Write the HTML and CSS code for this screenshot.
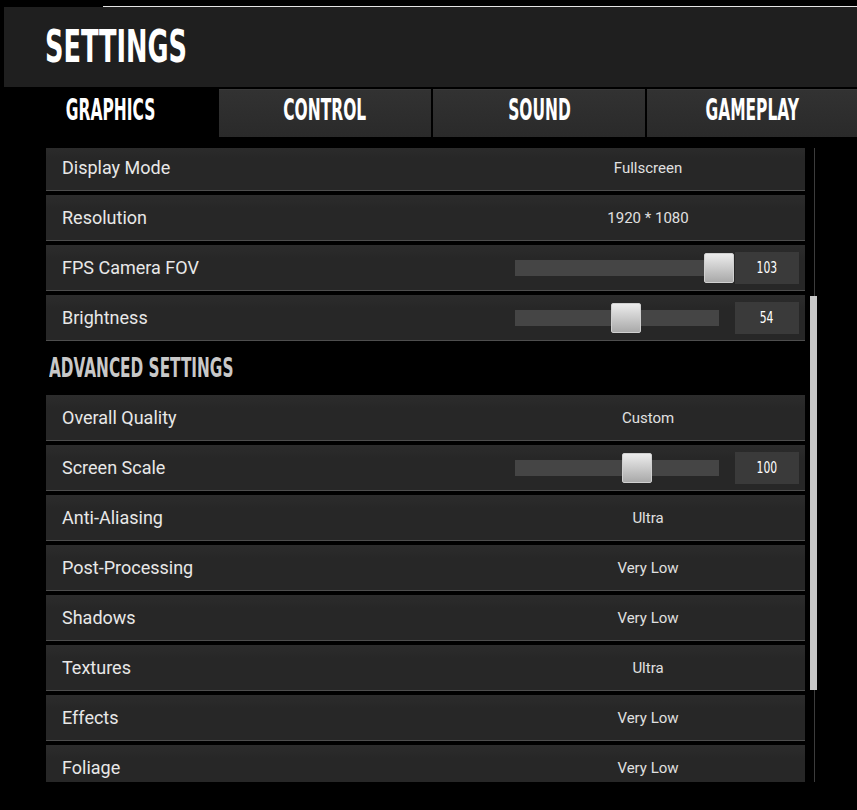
FILE: index.html
```html
<!DOCTYPE html>
<html lang="en">
<head>
<meta charset="utf-8">
<title>Settings</title>
<link rel="stylesheet" href="styles.css">
</head>
<body>
<div class="screen">
  <div class="topgap"></div>
  <div class="rule"></div>
  <header class="header"><h1 class="title">SETTINGS</h1></header>
  <nav class="tabs">
    <div class="tab active"><span class="tab-label">GRAPHICS</span></div>
    <div class="tab"><span class="tab-label">CONTROL</span></div>
    <div class="tab"><span class="tab-label">SOUND</span></div>
    <div class="tab"><span class="tab-label">GAMEPLAY</span></div>
  </nav>
  <main class="content">
    <div class="list">
      <div class="list-inner">
        <div class="row"><span class="label">Display Mode</span><div class="value">Fullscreen</div></div>
        <div class="row"><span class="label">Resolution</span><div class="value">1920 * 1080</div></div>
        <div class="row"><span class="label">FPS Camera FOV</span>
          <div class="value slider-value">
            <div class="track"><div class="thumb" style="left: 189px"></div></div>
            <div class="num"><span class="num-text">103</span></div>
          </div>
        </div>
        <div class="row"><span class="label">Brightness</span>
          <div class="value slider-value">
            <div class="track"><div class="thumb" style="left: 96px"></div></div>
            <div class="num"><span class="num-text">54</span></div>
          </div>
        </div>
        <div class="section"><h2 class="section-title">ADVANCED SETTINGS</h2></div>
        <div class="row"><span class="label">Overall Quality</span><div class="value">Custom</div></div>
        <div class="row"><span class="label">Screen Scale</span>
          <div class="value slider-value">
            <div class="track"><div class="thumb" style="left: 107px"></div></div>
            <div class="num"><span class="num-text">100</span></div>
          </div>
        </div>
        <div class="row"><span class="label">Anti-Aliasing</span><div class="value">Ultra</div></div>
        <div class="row"><span class="label">Post-Processing</span><div class="value">Very Low</div></div>
        <div class="row"><span class="label">Shadows</span><div class="value">Very Low</div></div>
        <div class="row"><span class="label">Textures</span><div class="value">Ultra</div></div>
        <div class="row"><span class="label">Effects</span><div class="value">Very Low</div></div>
        <div class="row"><span class="label">Foliage</span><div class="value">Very Low</div></div>
      </div>
    </div>
    <div class="scrollbar"><div class="scroll-thumb"></div></div>
  </main>
</div>
</body>
</html>
```
FILE: styles.css
```css
html, body {
  margin: 0;
  padding: 0;
  background: #000;
}
.screen {
  width: 857px;
  height: 810px;
  overflow: hidden;
  background: #000;
}
.topgap { height: 6px; }
.rule {
  height: 1px;
  margin-left: 103px;
  background: #e4e4e4;
}
.header {
  height: 80px;
  margin-left: 4px;
  background: #1f1f1f;
  display: flex;
  align-items: center;
  padding-left: 41px;
}
.title, .tab-label, .section-title, .num-text {
  font-family: "Liberation Sans Narrow", "DejaVu Sans Condensed", "Liberation Sans", sans-serif;
  font-weight: 700;
  display: inline-block;
  transform-origin: left center;
}
.title {
  margin: 0;
  color: #fff;
  font-size: 44px;
  line-height: 1;
  transform: scaleX(0.647);
}
.tabs {
  margin-top: 2px;
  height: 48px;
  display: grid;
  grid-template-columns: 217px 212px 212px 1fr;
  column-gap: 2px;
}
.tab {
  display: flex;
  align-items: center;
  justify-content: center;
  padding-bottom: 8px;
  background: linear-gradient(#323232, #2a2a2a);
  border-top: 1px solid #3a3a3a;
  box-sizing: border-box;
}
.tab.active {
  background: transparent;
  border-top-color: transparent;
  padding-left: 4px;
}
.tab-label {
  color: #fff;
  font-size: 31px;
  line-height: 1;
  transform: scaleX(0.555);
  transform-origin: center;
}
.content {
  margin-top: 11px;
  height: 634px;
  display: flex;
}
.list {
  margin-left: 46px;
  width: 759px;
  overflow: hidden;
}
.list-inner { margin-top: -3px; }
.row {
  height: 45px;
  margin-bottom: 4px;
  border-bottom: 1px solid #4e4e4e;
  background: linear-gradient(#2c2c2c, #272727 30%);
  display: flex;
  align-items: center;
  padding-left: 16px;
}
.label {
  flex: 1;
  font-family: Roboto, "Liberation Sans", sans-serif;
  font-size: 18px;
  color: #e8e8e8;
}
.value {
  width: 302px;
  margin-right: 6px;
  display: flex;
  align-items: center;
  justify-content: center;
  font-family: Roboto, "Liberation Sans", sans-serif;
  font-size: 15px;
  color: #e0e0e0;
}
.slider-value {
  justify-content: flex-end;
  gap: 16px;
}
.track {
  position: relative;
  width: 204px;
  height: 16px;
  background: #454545;
}
.thumb {
  position: absolute;
  top: -7px;
  width: 30px;
  height: 30px;
  box-sizing: border-box;
  border: 1px solid #d0d0d0;
  border-radius: 2px;
  background: linear-gradient(#ececec, #a9a9a9);
}
.num {
  width: 64px;
  height: 32px;
  background: #3a3a3a;
  display: flex;
  align-items: center;
  justify-content: center;
}
.num-text {
  color: #fff;
  font-size: 15px;
  font-weight: 400;
  transform: scaleX(0.8);
  transform-origin: center;
}
.section {
  height: 50px;
  box-sizing: border-box;
  padding-bottom: 6px;
  display: flex;
  align-items: center;
  padding-left: 3px;
}
.section-title {
  margin: 0;
  color: #c8c8c8;
  font-size: 27px;
  line-height: 1;
  transform: scaleX(0.63);
}
.scrollbar {
  position: relative;
  margin-left: 5px;
  width: 7px;
}
.scrollbar::before {
  content: "";
  position: absolute;
  left: 4px;
  top: 0;
  bottom: 0;
  width: 1px;
  background: #3c3c3c;
}
.scroll-thumb {
  position: absolute;
  left: 0;
  top: 148px;
  width: 7px;
  height: 394px;
  background: #c6c6c6;
}
```
